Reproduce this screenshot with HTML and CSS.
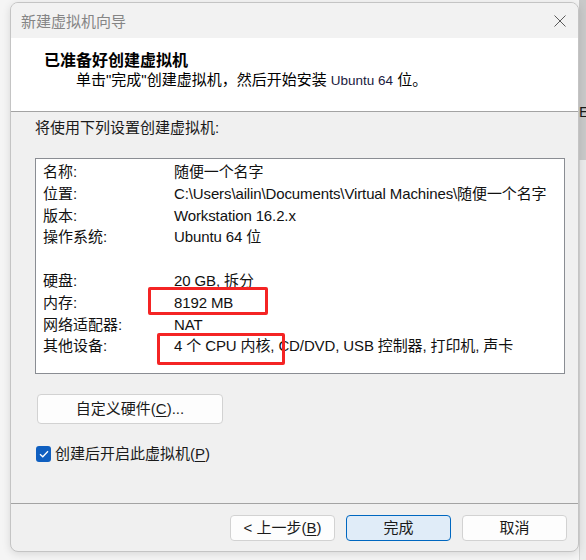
FILE: index.html
```html
<!DOCTYPE html>
<html lang="zh-CN">
<head>
<meta charset="utf-8">
<title>新建虚拟机向导</title>
<link rel="stylesheet" href="styles.css">
</head>
<body>
<div class="behind">
  <div class="behind-top"><span class="behind-char">E</span></div>
  <div class="behind-bottom"></div>
</div>

<div class="window">
  <div class="titlebar">
    <span class="title">新建虚拟机向导</span>
    <svg class="close" width="12" height="12" viewBox="0 0 12 12"><path d="M0.5 0.5 L11.5 11.5 M11.5 0.5 L0.5 11.5" stroke="#5a5a5a" stroke-width="1" fill="none"/></svg>
  </div>

  <div class="header">
    <div class="heading">已准备好创建虚拟机</div>
    <div class="subheading">单击"完成"创建虚拟机，然后开始安装 <span class="latin-sm">Ubuntu 64</span> 位。</div>
  </div>

  <div class="content">
    <div class="intro">将使用下列设置创建虚拟机:</div>
    <div class="summary">
      <div class="row"><span class="label">名称:</span><span class="value">随便一个名字</span></div>
      <div class="row"><span class="label">位置:</span><span class="value">C:\Users\ailin\Documents\Virtual Machines\随便一个名字</span></div>
      <div class="row"><span class="label">版本:</span><span class="value">Workstation 16.2.x</span></div>
      <div class="row"><span class="label">操作系统:</span><span class="value">Ubuntu 64 位</span></div>
      <div class="row"></div>
      <div class="row"><span class="label">硬盘:</span><span class="value">20 GB, 拆分</span></div>
      <div class="row"><span class="label">内存:</span><span class="value">8192 MB</span></div>
      <div class="row"><span class="label">网络适配器:</span><span class="value">NAT</span></div>
      <div class="row"><span class="label">其他设备:</span><span class="value">4 个 CPU 内核, CD/DVD, USB 控制器, 打印机, 声卡</span></div>
    </div>

    <button class="btn custom">自定义硬件(<u>C</u>)...</button>

    <label class="check-row">
      <span class="checkbox"><svg width="10" height="8" viewBox="0 0 10 8"><path d="M1 4.2 L3.8 6.8 L9 1.2" stroke="#fff" stroke-width="1.3" fill="none"/></svg></span>
      <span class="check-label">创建后开启此虚拟机(<u>P</u>)</span>
    </label>
  </div>

  <div class="footer">
    <button class="btn nav">&lt; 上一步(<u>B</u>)</button>
    <button class="btn nav primary">完成</button>
    <button class="btn nav">取消</button>
  </div>
</div>

<div class="mark mark-mem"></div>
<div class="mark mark-cpu"></div>
</body>
</html>
```

FILE: styles.css
```css
html, body {
  margin: 0;
  padding: 0;
}

body {
  width: 586px;
  height: 560px;
  overflow: hidden;
  position: relative;
  background: #f5f5f5;
  font-family: "Liberation Sans", "Noto Sans CJK SC", sans-serif;
  color: #1a1a1a;
}

.behind {
  position: absolute;
  left: 579px;
  top: 0;
  width: 7px;
  height: 560px;
  display: flex;
  flex-direction: column;
  overflow: hidden;
}

.behind-top {
  height: 160px;
  background: #c9c9c9;
  position: relative;
}

.behind-char {
  position: absolute;
  left: 0;
  top: 103px;
  font-size: 15px;
  line-height: 18px;
  color: #1a1a1a;
}

.behind-bottom {
  flex: 1;
  background: #ebebeb;
  border-left: 1px solid #d5d5d5;
}

.window {
  position: relative;
  z-index: 1;
  margin: 2px 0 0 10px;
  width: 569px;
  height: 550px;
  box-sizing: border-box;
  border: 1px solid #c4c4c4;
  border-radius: 8px;
  background: #f0f0f0;
  overflow: hidden;
  display: flex;
  flex-direction: column;
  box-shadow: 0 2px 8px rgba(0, 0, 0, 0.12);
}

.titlebar {
  height: 35px;
  flex: none;
  display: flex;
  align-items: center;
  justify-content: space-between;
  padding: 0 12px 0 10px;
  background: #f2f2f2;
}

.title {
  font-family: "Noto Sans CJK SC", sans-serif;
  font-size: 15px;
  color: #858585;
  line-height: 20px;
}

.header {
  height: 62px;
  flex: none;
  background: #ffffff;
  border-bottom: 1px solid #a3a3a3;
  padding-top: 11px;
}

.heading {
  padding-left: 33px;
  font-family: "Noto Sans CJK SC", sans-serif;
  font-weight: 700;
  font-size: 16px;
  line-height: 20px;
  color: #000;
}

.subheading {
  padding-left: 65px;
  margin-top: 1px;
  font-size: 15px;
  line-height: 20px;
  color: #000;
}

.latin-sm {
  font-size: 13.5px;
  color: #1a1a40;
}

.content {
  flex: 1;
  padding: 6px 0 0 0;
  display: flex;
  flex-direction: column;
  align-items: flex-start;
}

.intro {
  padding-left: 24px;
  font-size: 15px;
  line-height: 20px;
  color: #1a1a1a;
}

.summary {
  margin: 20px 0 0 24px;
  width: 530px;
  height: 216px;
  box-sizing: border-box;
  border: 1px solid #8a8d93;
  background: #ffffff;
  padding: 2px 0 0 7px;
}

.row {
  display: flex;
  height: 21.8px;
  line-height: 21.8px;
  font-size: 15px;
  color: #111;
  white-space: nowrap;
}

.label {
  width: 131px;
  flex: none;
}

.value {
  letter-spacing: -0.12px;
}

.btn {
  font-family: "Liberation Sans", "Noto Sans CJK SC", sans-serif;
  font-size: 15px;
  color: #1a1a1a;
  background: #fdfdfd;
  border: 1px solid #d2d2d2;
  border-radius: 4px;
  padding: 0;
  line-height: 20px;
  box-sizing: border-box;
}

.btn u,
.check-label u {
  text-underline-offset: 2px;
}

.custom {
  margin: 20px 0 0 26px;
  width: 186px;
  height: 30px;
}

.check-row {
  margin: 22px 0 0 25px;
  display: flex;
  align-items: center;
  gap: 4px;
  height: 16px;
}

.checkbox {
  width: 15px;
  height: 16px;
  border-radius: 3px;
  background: #0f5fc0;
  display: flex;
  align-items: center;
  justify-content: center;
}

.check-label {
  font-size: 15px;
  line-height: 20px;
  color: #1a1a1a;
}

.footer {
  height: 36px;
  flex: none;
  border-top: 1px solid #a3a3a3;
  display: flex;
  justify-content: flex-end;
  align-items: flex-start;
  gap: 11px;
  padding: 11px 11px 0 0;
}

.nav {
  width: 105px;
  height: 26px;
}

.primary {
  background: #e0ecf8;
  border-color: #0067c0;
}

.mark {
  position: absolute;
  z-index: 2;
  border: 3px solid #f42424;
  border-radius: 2px;
  box-sizing: border-box;
}

.mark-mem {
  left: 148px;
  top: 287px;
  width: 120px;
  height: 28px;
}

.mark-cpu {
  left: 157px;
  top: 333px;
  width: 128px;
  height: 32px;
}
```
